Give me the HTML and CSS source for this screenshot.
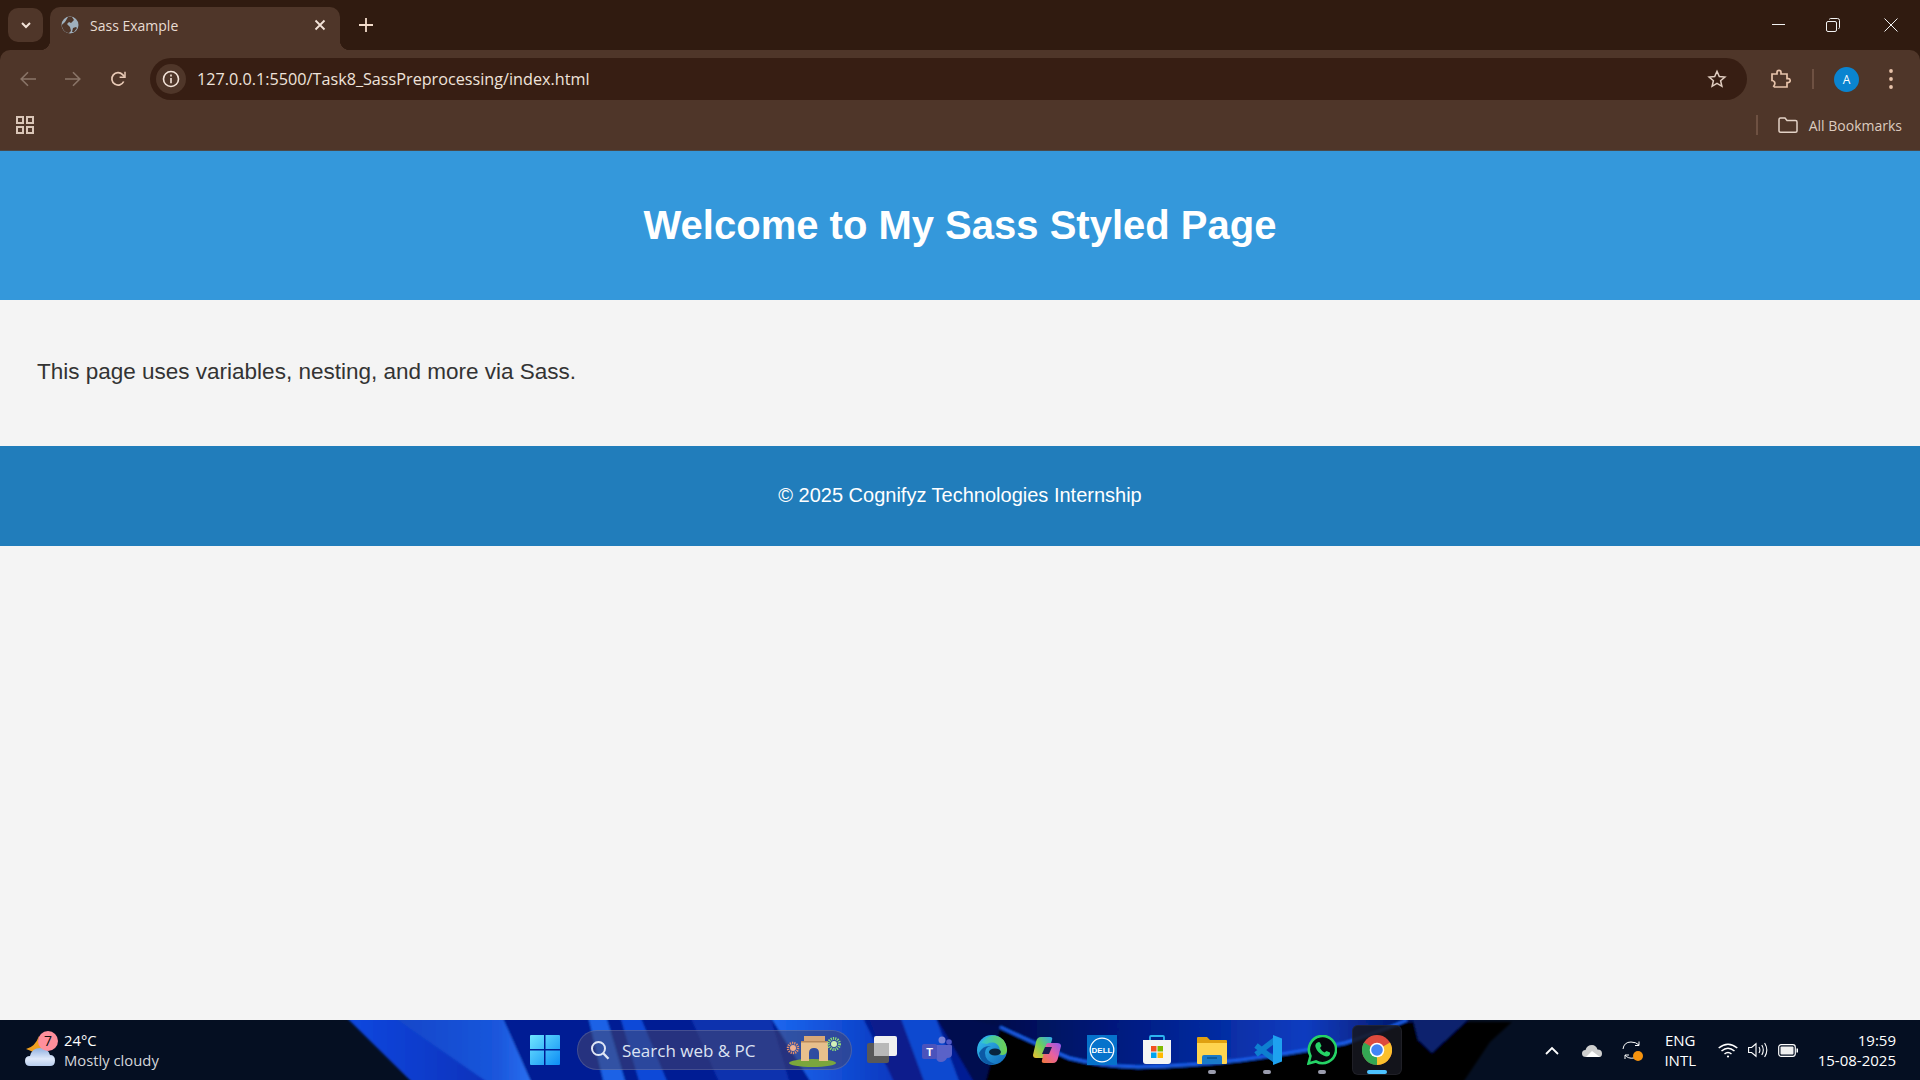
FILE: index.html
```html
<!DOCTYPE html>
<html lang="en">

<head>
    <meta charset="UTF-8">
    <meta name="viewport" content="width=device-width, initial-scale=1.0">
    <title>Sass Example</title>
    <link rel="stylesheet" href="styles.css">
</head>

<body>

    <!-- Browser chrome -->
    <div class="chrome">
        <div class="tabstrip">
            <button class="tab-search">
                <svg width="14" height="14" viewBox="0 0 14 14"><path d="M3 5l4 4 4-4" fill="none" stroke="#f3e3d8" stroke-width="2"/></svg>
            </button>
            <div class="tab">
                <svg class="tab-favicon" width="18" height="18" viewBox="0 0 18 18">
                    <circle cx="9" cy="9" r="8.5" fill="#9fb0bd"/>
                    <path d="M7 1l4 0 2 3-3 3-2-1-2 2 3 3 1 4-2 2C4 17 1 13 .8 9L4 6z" fill="#4f3629"/>
                    <path d="M12 12l3-1 1 1-3 4-2 0z" fill="#4f3629"/>
                </svg>
                <span class="tab-title">Sass Example</span>
                <svg class="tab-close" width="12" height="12" viewBox="0 0 12 12"><path d="M1.5 1.5l9 9M10.5 1.5l-9 9" stroke="#f3e3d8" stroke-width="1.8"/></svg>
            </div>
            <svg class="tab-new" width="14" height="14" viewBox="0 0 14 14"><path d="M7 0v14M0 7h14" stroke="#f3dccb" stroke-width="1.8"/></svg>
            <div class="win-controls">
                <svg width="14" height="14" viewBox="0 0 14 14"><path d="M0 6.5h13" stroke="#f2f2f2" stroke-width="1"/></svg>
                <svg width="14" height="14" viewBox="0 0 14 14" fill="none" stroke="#f2f2f2"><rect x=".5" y="3.5" width="10" height="10" rx="1.5"/><path d="M3.5 1.5q0-1 1-1h7q2 0 2 2v7q0 1-1 1"/></svg>
                <svg width="14" height="14" viewBox="0 0 14 14"><path d="M.5.5l13 13M13.5.5l-13 13" stroke="#f2f2f2" stroke-width="1"/></svg>
            </div>
        </div>

        <div class="toolbar">
            <div class="nav-btn">
                <svg width="16" height="16" viewBox="0 0 16 16" fill="none" stroke="#8a7568" stroke-width="1.6"><path d="M16 8H1.5M8 1.2L1.2 8 8 14.8"/></svg>
            </div>
            <div class="nav-btn">
                <svg width="16" height="16" viewBox="0 0 16 16" fill="none" stroke="#8a7568" stroke-width="1.6"><path d="M0 8h14.5M8 1.2L14.8 8 8 14.8"/></svg>
            </div>
            <div class="nav-btn">
                <svg width="16" height="16" viewBox="0 0 16 16" fill="none" stroke="#e8c9b5" stroke-width="1.7"><path d="M13.7 10.5A6.2 6.2 0 1 1 12.6 3.6L14.5 5.6"/><path d="M15 .8v5.4H9.6" stroke-width="1.5"/></svg>
            </div>
            <div class="omnibox">
                <span class="info-chip">
                    <svg width="18" height="18" viewBox="0 0 18 18" fill="none" stroke="#f3e3d8" stroke-width="1.6"><circle cx="9" cy="9" r="7.5"/><path d="M9 8v5.2M9 4.6v1.8"/></svg>
                </span>
                <span class="url">127.0.0.1:5500/Task8_SassPreprocessing/index.html</span>
                <svg class="star" width="20" height="20" viewBox="0 0 20 20"><path d="M10 2.3l2.3 5.2 5.6.5-4.3 3.7 1.3 5.6L10 14.4l-4.900 2.900 1.300-5.600L2.100 8l5.600-.5z" fill="none" stroke="#e0cdc0" stroke-width="1.500"/></svg>
            </div>
            <div class="toolbar-right">
                <svg width="20" height="20" viewBox="0 0 20 20"><path d="M1 5h5V3.400a2 2 0 0 1 4 0V5h6v4.600h1.200a2 2 0 0 1 0 4H16V18H3.500l-.8-.8Q4.500 15 3.500 13 2.500 11.500 1 11.500z" fill="none" stroke="#e8c3aa" stroke-width="1.700"/></svg>
                <span class="divider toolbar-divider"></span>
                <span class="avatar">A</span>
                <svg class="menu-dots" width="4" height="20" viewBox="0 0 4 20" fill="#e8c3aa"><circle cx="2" cy="2" r="1.900"/><circle cx="2" cy="10" r="1.900"/><circle cx="2" cy="18" r="1.900"/></svg>
            </div>
        </div>

        <div class="bookmarks">
            <svg width="18" height="18" viewBox="0 0 18 18" fill="none" stroke="#d9c5b7" stroke-width="2"><rect x="1" y="1" width="6" height="6"/><rect x="11" y="1" width="6" height="6"/><rect x="1" y="11" width="6" height="6"/><rect x="11" y="11" width="6" height="6"/></svg>
            <span class="divider bookmarks-divider"></span>
            <svg width="20" height="16" viewBox="0 0 20 16" fill="none" stroke="#e3d2c6" stroke-width="1.500"><path d="M1 14V2.500Q1 1 2.500 1H7l2 2.500h8.500Q19 3.500 19 5v9q0 1.200-1.500 1.200h-15Q1 15.200 1 14z"/></svg>
            <span class="bookmarks-label">All Bookmarks</span>
        </div>
    </div>

    <!-- The page itself -->
    <div class="page">
        <header class="site-header">
            <h1>Welcome to My Sass Styled Page</h1>
        </header>
        <main class="site-main">
            <p>This page uses variables, nesting, and more via Sass.</p>
        </main>
        <footer class="site-footer">© 2025 Cognifyz Technologies Internship</footer>
    </div>

    <!-- Windows taskbar -->
    <div class="taskbar">
        <svg class="wallpaper" width="1920" height="60" viewBox="0 0 1920 60">
            <defs>
                <linearGradient id="wpBand1" x1="0" y1="0" x2="1" y2="0">
                    <stop offset="0" stop-color="#0a48e0"/>
                    <stop offset="1" stop-color="#0830b8"/>
                </linearGradient>
                <linearGradient id="wpBand2" x1="0" y1="0" x2="1" y2="0">
                    <stop offset="0" stop-color="#1246c8"/>
                    <stop offset=".75" stop-color="#1a56dc"/>
                    <stop offset="1" stop-color="#2a70f0"/>
                </linearGradient>
                <linearGradient id="wpSweep" x1="0" y1="0" x2="1" y2="0">
                    <stop offset="0" stop-color="#000a3c"/>
                    <stop offset=".35" stop-color="#021a80"/>
                    <stop offset=".75" stop-color="#0a3cc0"/>
                    <stop offset="1" stop-color="#04125c"/>
                </linearGradient>
                <linearGradient id="wpMid" x1="0" y1="0" x2="1" y2="0">
                    <stop offset="0" stop-color="#1c68f0"/>
                    <stop offset="1" stop-color="#0a38c0"/>
                </linearGradient>
                <filter id="wpSoft"><feGaussianBlur stdDeviation="1.2"/></filter>
            </defs>
            <g filter="url(#wpSoft)">
                <path d="M345 -4H1000V64H414z" fill="#051e94"/>
                <path d="M345 -4H395L500 64H414z" fill="url(#wpBand1)"/>
                <path d="M392 -4H502Q515 25 532 64H490z" fill="url(#wpBand2)"/>
                <path d="M588 -4H606L626 64H604z" fill="#1a62e6"/>
                <path d="M620 -4H640L668 64H640z" fill="#0d49d8"/>
                <path d="M690 -4H770L790 64H720z" fill="#0a30ae"/>
                <path d="M770 -4H862L895 64H812z" fill="url(#wpMid)"/>
                <path d="M868 -4H900L925 64H895z" fill="#0a1f8c"/>
                <path d="M900 -4H935L960 64H925z" fill="#1048d0"/>
                <path d="M935 -4H1000V64H975z" fill="#000a50"/>
                <path d="M960 -4H1420V0L1345 23 1241 40 1138 47 1069 38 1000 7z" fill="url(#wpSweep)"/>
                <path d="M1000 7Q1040 26 1069 38 1100 46 1138 47 1190 46 1241 40 1300 32 1345 23 1380 12 1407 0" fill="none" stroke="#1a60f0" stroke-width="3"/>
                <path d="M985 64L1000 9 1069 40Q1100 48 1138 49 1190 48 1241 42 1300 34 1345 25L1407 2H1512L1490 22 1462 64z" fill="#000"/>
                <path d="M1412 -4H1472L1432 33 1418 20z" fill="#07206e"/>
            </g>
        </svg>

        <div class="weather">
            <span class="weather-icon">
                <svg width="30" height="33" viewBox="0 0 30 33">
                    <defs><linearGradient id="cloud" x1="0" y1="0" x2="0" y2="1"><stop offset="0" stop-color="#8fb0e0"/><stop offset=".6" stop-color="#dfe9fa"/><stop offset="1" stop-color="#b8cdee"/></linearGradient></defs>
                    <path d="M14 2Q12 12 20 16L8 18Q4 16 1 15 10 13 14 2z" fill="#f0a020"/>
                    <path d="M5 32q-5 0-5-5t5-5q2-8 10-8t10 7q5 0 5 5.500T25 32z" fill="url(#cloud)"/>
                </svg>
                <span class="weather-badge">7</span>
            </span>
            <div class="weather-text">
                <span class="temp">24°C</span>
                <span class="cond">Mostly cloudy</span>
            </div>
        </div>

        <div class="task-center">
            <svg class="win-logo" width="30" height="30" viewBox="0 0 30 30">
                <defs><linearGradient id="win" x1="0" y1="0" x2="1" y2="1"><stop offset="0" stop-color="#6fe6ff"/><stop offset="1" stop-color="#0c8cf5"/></linearGradient></defs>
                <path d="M0 1q0-1 1-1h13v14H0zM15.500 0H29q1 0 1 1v13H15.500zM0 15.500h14V30H1q-1 0-1-1zM15.500 15.500H30V29q0 1-1 1H15.500z" fill="url(#win)"/>
            </svg>

            <div class="searchbox">
                <svg width="20" height="20" viewBox="0 0 20 20" fill="none" stroke="#dfe6f5" stroke-width="2"><circle cx="8.500" cy="8.500" r="6.500"/><path d="M13.200 13.200L18.500 18.800" stroke-width="2.400"/></svg>
                <span class="search-text">Search web &amp; PC</span>
                <svg class="search-art" width="55" height="33" viewBox="0 0 55 33">
                    <ellipse cx="26.500" cy="29" rx="23.500" ry="4" fill="#7ba63c"/>
                    <path d="M15 7h27v20h-9V19q0-5-5-5t-5 5v8h-8z" fill="#e8c08c"/>
                    <path d="M18 2h21v5H18z" fill="#d8a878"/>
                    <path d="M15 7h27v1.500H15z" fill="#b8895a"/>
                    <circle cx="7" cy="14" r="3" fill="#f0b090"/>
                    <circle cx="7" cy="14" r="5" fill="none" stroke="#e8906a" stroke-width="2.500" stroke-dasharray="1.200 1"/>
                    <circle cx="48" cy="10" r="3" fill="#d0f0b8"/>
                    <circle cx="48" cy="10" r="5.500" fill="none" stroke="#8ede78" stroke-width="3" stroke-dasharray="1.200 1"/>
                </svg>
            </div>

            <div class="task-icons">
                <div class="task-icon">
                    <svg width="30" height="28" viewBox="0 0 30 28"><rect x="0" y="7" width="22" height="20" rx="2" fill="#585858"/><rect x="7" y="0" width="23" height="20" rx="2" fill="#f0f0f0"/><rect x="7" y="7" width="15" height="13" fill="#b8b8b8"/></svg>
                </div>
                <div class="task-icon">
                    <svg width="30" height="28" viewBox="0 0 30 28"><circle cx="20" cy="4" r="3.500" fill="#7b83d8"/><circle cx="27" cy="6" r="2.800" fill="#5059c9"/><path d="M14 9h15q1 0 1 1v8q0 4-5 4-2 4-6 4-5 0-5-6z" fill="#5a62c8"/><rect x="0" y="8" width="15" height="15" rx="2" fill="#4b53bc"/><text x="7.500" y="20" class="teams-t">T</text></svg>
                </div>
                <div class="task-icon">
                    <svg width="30" height="30" viewBox="0 0 30 30">
                        <defs>
                            <linearGradient id="edgeA" x1="0" y1="0" x2="1" y2="1"><stop offset="0" stop-color="#35c1f1"/><stop offset="1" stop-color="#1066b8"/></linearGradient>
                            <linearGradient id="edgeB" x1="0" y1="0" x2="1" y2="0"><stop offset="0" stop-color="#2fc4d8"/><stop offset="1" stop-color="#6fd04c"/></linearGradient>
                        </defs>
                        <circle cx="15" cy="15" r="15" fill="url(#edgeA)"/>
                        <path d="M4 8Q10 0 18 .5 28 2 30 14q.3 5-4 6-4 .5-5-2 2-2 1.500-5C21 8 15 6 10 9z" fill="url(#edgeB)"/>
                        <path d="M14 11q-6 1-6 7 0 8 10 11-4 1-7 .3Q3 27 2 18q4-8 12-7z" fill="#0c5aa6"/>
                        <ellipse cx="18" cy="17" rx="6" ry="3.500" fill="#08243f"/>
                    </svg>
                </div>
                <div class="task-icon">
                    <svg width="28" height="26" viewBox="0 0 28 26">
                        <defs>
                            <linearGradient id="copA" x1="0" y1="1" x2="1" y2="0"><stop offset="0" stop-color="#f0c030"/><stop offset=".5" stop-color="#6fd05a"/><stop offset="1" stop-color="#2fa8f0"/></linearGradient>
                            <linearGradient id="copB" x1="0" y1="1" x2="1" y2="0"><stop offset="0" stop-color="#f07838"/><stop offset=".5" stop-color="#e860a0"/><stop offset="1" stop-color="#9058f0"/></linearGradient>
                        </defs>
                        <path d="M8 0h9q3 0 2 3l-5 15q-1 3-4 3H3Q0 21 0 18L3 5q1-5 5-5z" fill="url(#copA)"/>
                        <path d="M15 6h9q4 0 4 3l-3 12q-1 5-5 5h-9q-3 0-2-3l4-15q1-2 2-2z" fill="url(#copB)"/>
                        <path d="M12 10h7l-3 7H9z" fill="#1a1a50"/>
                    </svg>
                </div>
                <div class="task-icon">
                    <svg width="30" height="30" viewBox="0 0 30 30"><rect width="30" height="30" fill="#0672cb"/><circle cx="15" cy="15" r="11.800" fill="none" stroke="#fff" stroke-width="1.300"/><text x="15" y="17.800" class="dell-t">DELL</text></svg>
                </div>
                <div class="task-icon">
                    <svg width="30" height="30" viewBox="0 0 30 30"><path d="M8 5V2q0-1 1-1h12q1 0 1 1v3" fill="none" stroke="#2cb5f0" stroke-width="1.800"/><path d="M1 5h28v21q0 3-3 3H4q-3 0-3-3z" fill="#f4f4f4"/><rect x="9" y="11" width="5.500" height="5.500" fill="#f25022"/><rect x="15.500" y="11" width="5.500" height="5.500" fill="#7fba00"/><rect x="9" y="17.500" width="5.500" height="5.500" fill="#00a4ef"/><rect x="15.500" y="17.500" width="5.500" height="5.500" fill="#ffb900"/></svg>
                </div>
                <div class="task-icon is-open">
                    <svg width="30" height="27" viewBox="0 0 30 27"><path d="M0 1q0-1 1-1h9l3 3h16q1 0 1 1v6H0z" fill="#e0a010"/><path d="M0 6h30v20q0 1-1 1H1q-1 0-1-1z" fill="#ffd44f"/><path d="M5 27v-7q0-2 2-2h16q2 0 2 2v7z" fill="#1a7ac8"/><path d="M10 21h10" stroke="#0b4f8c" stroke-width="1.400"/></svg>
                </div>
                <div class="task-icon is-open">
                    <svg width="30" height="30" viewBox="0 0 30 30"><path d="M24 4L4 19.500M4 10.500L24 26" fill="none" stroke="#0e7fd0" stroke-width="5.500"/><path d="M21 0l9 3.500v23L21 30z" fill="#1ea2f0"/></svg>
                </div>
                <div class="task-icon is-open">
                    <svg width="30" height="30" viewBox="0 0 30 30"><path d="M1.500 28.500l2-7.500A13.600 13.600 0 1 1 9 26.500z" fill="#05060c" stroke="#25d366" stroke-width="2.600"/><path d="M10.500 7.500q1.500-1 2.500 0l1.500 3.500-1.500 2q1.500 3 4.500 4.500l2-1.500 3.500 1.500q.5 2-1 3.200-2 1.500-5.500-.2-6-2.500-8-8.500-.8-3 2-4.500z" fill="#25d366"/></svg>
                </div>
                <div class="task-icon is-active">
                    <svg width="30" height="30" viewBox="0 0 30 30"><circle cx="15" cy="15" r="15" fill="#dd4b3e"/><path d="M15 15L28 7.500A15 15 0 0 1 15 30z" fill="#fbc02d"/><path d="M15 15L15 30A15 15 0 0 1 2 7.500z" fill="#34a853"/><circle cx="15" cy="15" r="7.300" fill="#fff"/><circle cx="15" cy="15" r="5.800" fill="#4285f4"/></svg>
                </div>
            </div>
        </div>

        <div class="tray">
            <svg class="tray-chevron" width="14" height="9" viewBox="0 0 14 9"><path d="M1 8l6-6 6 6" fill="none" stroke="#fff" stroke-width="1.800"/></svg>
            <svg class="tray-cloud" width="20" height="13" viewBox="0 0 20 13"><path d="M4 13q-4 0-4-3.500T3.500 6Q5 1 10 1q4 0 5.500 4.500 4.500 0 4.500 4T16 13z" fill="#cfcfcf"/><path d="M4 13l6-6 8 6z" fill="#fff"/></svg>
            <span class="tray-sync">
                <svg width="20" height="20" viewBox="0 0 20 20" fill="none" stroke="#fff" stroke-width="1"><path d="M1 9Q2 2 9 2q5 0 8 3M17 1.500V5.500H13"/><path d="M12 18q-6 1-9-3M3 19v-4h4"/></svg>
                <span class="sync-dot"></span>
            </span>
            <div class="tray-lang"><span>ENG</span><span>INTL</span></div>
            <svg class="tray-wifi" width="20" height="15" viewBox="0 0 20 15" fill="none" stroke="#fff" stroke-width="1.500"><path d="M.7 5Q10-2.500 19.300 5M3.500 8Q10 2.500 16.500 8M6.500 11Q10 8 13.500 11"/><circle cx="10" cy="13.500" r="1.100" fill="#fff" stroke="none"/></svg>
            <svg class="tray-vol" width="20" height="16" viewBox="0 0 20 16" fill="none" stroke="#fff" stroke-width="1.100"><path d="M.6 5.500h3L8 1.800v12.400L3.600 10.500h-3z"/><path d="M11 5q1.800 3 0 6M13.800 3q3 5 0 10M16.600 1q4.500 7 0 14"/></svg>
            <svg class="tray-batt" width="20" height="13" viewBox="0 0 20 13"><rect x=".7" y=".7" width="16.600" height="11.600" rx="2.500" fill="none" stroke="#fff" stroke-width="1.200"/><rect x="2.500" y="2.500" width="13" height="8" rx="1" fill="#f0f0f0"/><rect x="18.500" y="4.500" width="1.500" height="4" fill="#fff"/></svg>
            <div class="tray-clock"><span>19:59</span><span>15-08-2025</span></div>
        </div>
    </div>

</body>

</html>
```

FILE: styles.css
```css
* {
    box-sizing: border-box;
}

body {
    margin: 0;
    width: 1920px;
    height: 1080px;
    overflow: hidden;
    display: flex;
    flex-direction: column;
    background-color: #f4f4f4;
    font-family: "Liberation Sans", Arial, sans-serif;
}

svg {
    display: block;
    flex-shrink: 0;
}

/* Browser chrome */
.chrome {
    background-color: #301b10;
}

.tabstrip {
    height: 50px;
    display: flex;
    align-items: flex-end;
    padding-left: 8px;
}

.tab-search {
    width: 35px;
    height: 34px;
    margin-bottom: 8px;
    padding: 0;
    border: 0;
    border-radius: 10px;
    display: flex;
    align-items: center;
    justify-content: center;
    background-color: #4f3629;
}

.tab {
    position: relative;
    width: 290px;
    height: 43px;
    margin-left: 7px;
    padding: 0 14px 7px 11px;
    display: flex;
    align-items: center;
    border-radius: 10px 10px 0 0;
    background-color: #4f3629;
}

.tab::before,
.tab::after {
    content: "";
    position: absolute;
    bottom: 0;
    width: 10px;
    height: 10px;
}

.tab::before {
    left: -10px;
    background: radial-gradient(circle at 0 0, #301b10 10px, #4f3629 10.5px);
}

.tab::after {
    right: -10px;
    background: radial-gradient(circle at 100% 0, #301b10 10px, #4f3629 10.5px);
}

.tab-favicon {
    margin-right: 11px;
}

.tab-title {
    flex: 1;
    font-family: "Open Sans", sans-serif;
    font-size: 14px;
    color: #e8dcd3;
}

.tab-new {
    margin: 0 0 18px 19px;
}

.win-controls {
    margin-left: auto;
    margin-bottom: 18px;
    padding-right: 22px;
    display: flex;
    gap: 44px;
}

.win-controls svg:first-child {
    margin-right: -4px;
}

.toolbar {
    height: 50px;
    padding: 8px 0 0 5px;
    display: flex;
    background-color: #4f3629;
    border-radius: 10px 10px 0 0;
}

.nav-btn {
    width: 45px;
    height: 42px;
    display: flex;
    align-items: center;
    justify-content: center;
}

.omnibox {
    flex: 1;
    height: 42px;
    margin-left: 10px;
    padding: 0 20px 0 6px;
    display: flex;
    align-items: center;
    border-radius: 21px;
    background-color: #371e13;
}

.info-chip {
    width: 30px;
    height: 30px;
    margin-right: 11px;
    border-radius: 50%;
    display: flex;
    align-items: center;
    justify-content: center;
    background-color: #4f3629;
}

.url {
    flex: 1;
    font-family: "Open Sans", sans-serif;
    font-size: 16.2px;
    color: #efe3db;
}

.toolbar-right {
    width: 173px;
    height: 42px;
    padding-left: 24px;
    display: flex;
    align-items: center;
}

.divider {
    width: 2px;
    height: 20px;
    background-color: #6e5142;
}

.toolbar-divider {
    margin-left: 21px;
}

.avatar {
    width: 25px;
    height: 25px;
    margin-left: 20px;
    border-radius: 50%;
    display: flex;
    align-items: center;
    justify-content: center;
    font-family: "Open Sans", sans-serif;
    font-size: 12px;
    color: #fff;
    background-color: #0a84d0;
}

.menu-dots {
    margin-left: 30px;
}

.bookmarks {
    height: 51px;
    padding: 0 18px 0 16px;
    display: flex;
    align-items: center;
    background-color: #4f3629;
    border-bottom: 1px solid #4a4a4a;
}

.bookmarks-divider {
    margin: 0 20px 0 auto;
}

.bookmarks-label {
    margin-left: 11px;
    font-family: "Open Sans", sans-serif;
    font-size: 14px;
    color: #dccbbf;
}

/* Page */
.page {
    flex: 1;
}

.site-header {
    padding: 40px 0;
    text-align: center;
    color: #fff;
    background-color: #3498db;
}

.site-header h1 {
    margin: 0;
    font-size: 40px;
    line-height: 69px;
}

.site-main {
    padding: 51px 37px 53px;
    color: #333;
}

.site-main p {
    margin: 0;
    font-size: 22.5px;
    line-height: 42px;
}

.site-footer {
    height: 100px;
    padding-bottom: 2px;
    display: flex;
    align-items: center;
    justify-content: center;
    font-size: 20px;
    color: #fff;
    background-color: #217dbb;
}

/* Taskbar */
.taskbar {
    position: relative;
    height: 60px;
    display: flex;
    align-items: center;
    background-color: #050f22;
    font-family: "Open Sans", sans-serif;
    color: #fff;
}

.wallpaper {
    position: absolute;
    top: 0;
    left: 0;
}

.weather {
    position: relative;
    width: 530px;
    padding-left: 25px;
    display: flex;
    align-items: center;
}

.weather-icon {
    position: relative;
    width: 30px;
    height: 33px;
    margin-right: 9px;
}

.weather-badge {
    position: absolute;
    top: -3px;
    left: 13px;
    width: 20px;
    height: 20px;
    border-radius: 50%;
    text-align: center;
    font-size: 14px;
    line-height: 20px;
    color: #111;
    background-color: #ff8f9c;
}

.weather-text {
    display: flex;
    flex-direction: column;
    font-size: 14.8px;
    line-height: 20px;
}

.cond {
    color: #d4d6da;
}

.task-center {
    position: relative;
    display: flex;
    align-items: center;
}

.searchbox {
    width: 275px;
    height: 40px;
    margin-left: 17px;
    padding: 0 10px 0 12px;
    display: flex;
    align-items: center;
    border-radius: 20px;
    border: 1px solid rgba(255, 255, 255, 0.14);
    background-color: rgba(70, 70, 110, 0.55);
}

.search-text {
    flex: 1;
    margin-left: 12px;
    font-size: 17px;
    color: #dde3f2;
}

.task-icons {
    margin-left: 2.5px;
    display: flex;
}

.task-icon {
    position: relative;
    width: 55px;
    height: 50px;
    display: flex;
    align-items: center;
    justify-content: center;
}

.task-icon.is-open::after,
.task-icon.is-active::after {
    content: "";
    position: absolute;
    bottom: 1px;
    left: 50%;
    width: 8px;
    height: 4px;
    margin-left: -4px;
    border-radius: 2px;
    background-color: #9a9cad;
}

.task-icon.is-active {
    width: 50px;
    margin: 0 2.5px;
    border-radius: 6px;
    background-color: rgba(22, 24, 32, 0.85);
    box-shadow: inset 0 0 0 1px rgba(255, 255, 255, 0.05);
}

.task-icon.is-active::after {
    width: 20px;
    margin-left: -10px;
    background-color: #4cc2ff;
}

.teams-t {
    font-family: "Liberation Sans", sans-serif;
    font-size: 11px;
    font-weight: bold;
    text-anchor: middle;
    fill: #fff;
}

.dell-t {
    font-family: "Liberation Sans", sans-serif;
    font-size: 8px;
    font-weight: bold;
    text-anchor: middle;
    fill: #fff;
}

.tray {
    position: relative;
    margin-left: auto;
    padding-right: 24px;
    display: flex;
    align-items: center;
    font-size: 15px;
}

.tray-cloud {
    margin-left: 23px;
}

.tray-sync {
    position: relative;
    margin-left: 20px;
}

.sync-dot {
    position: absolute;
    right: -1px;
    bottom: -1px;
    width: 10px;
    height: 10px;
    border-radius: 50%;
    background-color: #f7930e;
}

.tray-lang {
    margin-left: 22px;
    display: flex;
    flex-direction: column;
    align-items: center;
    line-height: 20px;
}

.tray-wifi {
    margin-left: 22px;
}

.tray-vol {
    margin-left: 10px;
}

.tray-batt {
    margin-left: 10px;
}

.tray-clock {
    width: 98px;
    display: flex;
    flex-direction: column;
    align-items: flex-end;
    line-height: 20px;
}
```
